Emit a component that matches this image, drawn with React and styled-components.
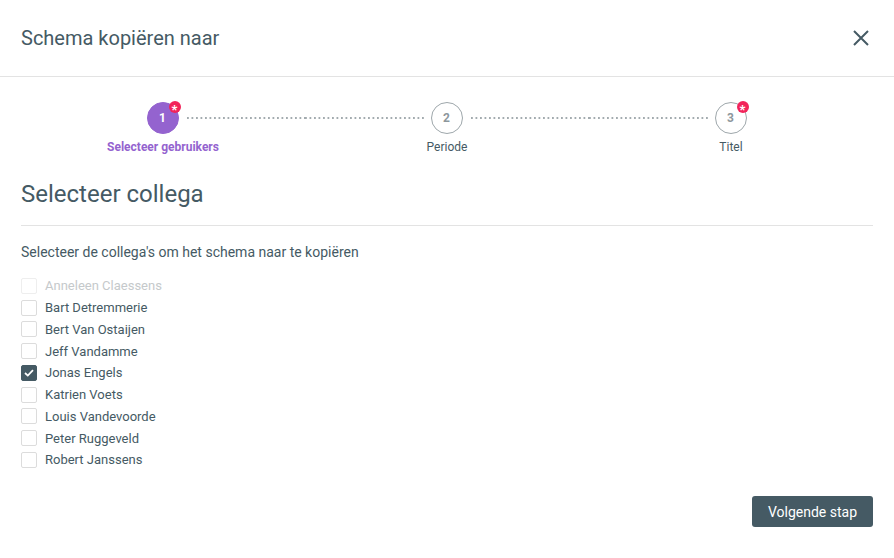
import React, { useState } from 'react'
import styled, { createGlobalStyle } from 'styled-components'

const GlobalStyle = createGlobalStyle`
  html, body {
    margin: 0;
    padding: 0;
    background: #fff;
    font-family: Roboto, "Liberation Sans", sans-serif;
    color: #455a64;
  }
`

const Modal = styled.div`
  width: 894px;
  height: 558px;
  background: #fff;
  display: flex;
  flex-direction: column;
`

const Header = styled.div`
  height: 77px;
  box-sizing: border-box;
  border-bottom: 1px solid #e3e3e3;
  display: flex;
  align-items: center;
  justify-content: space-between;
  padding: 0 21px 1px;
`

const Title = styled.h1`
  margin: 0;
  font-size: 20px;
  font-weight: 400;
  color: #455a64;
`

const CloseButton = styled.button`
  border: 0;
  background: none;
  padding: 0;
  width: 24px;
  height: 24px;
  display: flex;
  align-items: center;
  justify-content: center;
  cursor: pointer;
`

const Body = styled.div`
  flex: 1;
  display: flex;
  flex-direction: column;
  padding: 24px 21px 0;
`

const Stepper = styled.div`
  display: grid;
  grid-template-columns: repeat(3, 1fr);
`

const Step = styled.div`
  display: flex;
  flex-direction: column;
  align-items: center;
`

const CircleRow = styled.div`
  display: flex;
  align-items: center;
  width: 100%;
  height: 34px;
`

const Connector = styled.div`
  flex: 1;
  height: 2px;
  background-image: ${p =>
    p.$blank ? 'none' : 'linear-gradient(to right, #a3abaf 2px, transparent 2px)'};
  background-size: 4.5px 2px;
  background-repeat: repeat-x;
  margin: ${p => (p.$side === 'left' ? '0 7px 0 0' : '0 0 0 8px')};
`

const Circle = styled.div`
  position: relative;
  width: 32px;
  height: 32px;
  box-sizing: border-box;
  border-radius: 50%;
  display: flex;
  align-items: center;
  justify-content: center;
  font-size: 12px;
  font-weight: 700;
  background: ${p => (p.$active ? '#9463cf' : '#fff')};
  border: 1px solid ${p => (p.$active ? '#9463cf' : '#9ea7ab')};
  color: ${p => (p.$active ? '#fff' : '#8d979c')};
`

const Badge = styled.span`
  position: absolute;
  top: -2px;
  right: -3px;
  width: 12px;
  height: 12px;
  border-radius: 50%;
  background: #f2245a;
  color: #fff;
  font-size: 13px;
  font-weight: 700;
  line-height: 17px;
  text-align: center;
`

const StepLabel = styled.div`
  margin-top: 5px;
  font-size: 12px;
  font-weight: ${p => (p.$active ? 700 : 400)};
  color: ${p => (p.$active ? '#9463cf' : '#455a64')};
`

const Heading = styled.h2`
  margin: 26px 0 0;
  font-size: 24px;
  font-weight: 400;
  color: #455a64;
  padding-bottom: 17px;
  border-bottom: 1px solid #e3e3e3;
`

const Description = styled.p`
  margin: 18px 0 15px;
  font-size: 14px;
  color: #455a64;
`

const List = styled.ul`
  list-style: none;
  margin: 0;
  padding: 0;
  display: flex;
  flex-direction: column;
`

const Row = styled.li`
  display: flex;
  align-items: center;
  height: 21.75px;
  gap: 8px;
  font-size: 13px;
  color: ${p => (p.$disabled ? '#c5c9cb' : '#455a64')};
`

const Box = styled.span`
  width: 16px;
  height: 16px;
  box-sizing: border-box;
  border-radius: 2px;
  display: flex;
  align-items: center;
  justify-content: center;
  background: ${p => (p.$checked ? '#455a64' : '#fff')};
  border: 1px solid ${p => (p.$checked ? '#455a64' : p.$disabled ? '#eeeeee' : '#dcdcdc')};
`

const Footer = styled.div`
  margin-top: auto;
  display: flex;
  justify-content: flex-end;
  padding-bottom: 31px;
`

const PrimaryButton = styled.button`
  height: 31px;
  width: 121px;
  border: 0;
  border-radius: 3px;
  background: #455a64;
  color: #fff;
  font-family: Roboto, "Liberation Sans", sans-serif;
  font-size: 14px;
  cursor: pointer;
`

const steps = [
  { n: 1, label: 'Selecteer gebruikers', active: true, required: true },
  { n: 2, label: 'Periode' },
  { n: 3, label: 'Titel', required: true },
]

const people = [
  'Anneleen Claessens',
  'Bart Detremmerie',
  'Bert Van Ostaijen',
  'Jeff Vandamme',
  'Jonas Engels',
  'Katrien Voets',
  'Louis Vandevoorde',
  'Peter Ruggeveld',
  'Robert Janssens',
]

export default function App() {
  const [checked, setChecked] = useState({ 'Jonas Engels': true })

  const toggle = name => {
    if (name === 'Anneleen Claessens') return
    setChecked({ ...checked, [name]: !checked[name] })
  }

  return (
    <Modal>
      <GlobalStyle />
      <Header>
        <Title>Schema kopiëren naar</Title>
        <CloseButton aria-label="Sluiten">
          <svg width="18" height="18" viewBox="0 0 18 18">
            <path d="M2 2 L16 16 M16 2 L2 16" stroke="#455a64" strokeWidth="2" />
          </svg>
        </CloseButton>
      </Header>
      <Body>
        <Stepper>
          {steps.map((s, i) => (
            <Step key={s.n}>
              <CircleRow>
                <Connector $side="left" $blank={i === 0} />
                <Circle $active={s.active}>
                  {s.n}
                  {s.required && <Badge>*</Badge>}
                </Circle>
                <Connector $side="right" $blank={i === steps.length - 1} />
              </CircleRow>
              <StepLabel $active={s.active}>{s.label}</StepLabel>
            </Step>
          ))}
        </Stepper>
        <Heading>Selecteer collega</Heading>
        <Description>Selecteer de collega's om het schema naar te kopiëren</Description>
        <List>
          {people.map(name => {
            const disabled = name === 'Anneleen Claessens'
            const on = !!checked[name]
            return (
              <Row key={name} $disabled={disabled} onClick={() => toggle(name)}>
                <Box $checked={on} $disabled={disabled}>
                  {on && (
                    <svg width="10" height="8" viewBox="0 0 10 8">
                      <path d="M1 4 L3.8 6.6 L9 1.2" stroke="#fff" strokeWidth="1.8" fill="none" />
                    </svg>
                  )}
                </Box>
                {name}
              </Row>
            )
          })}
        </List>
        <Footer>
          <PrimaryButton>Volgende stap</PrimaryButton>
        </Footer>
      </Body>
    </Modal>
  )
}
